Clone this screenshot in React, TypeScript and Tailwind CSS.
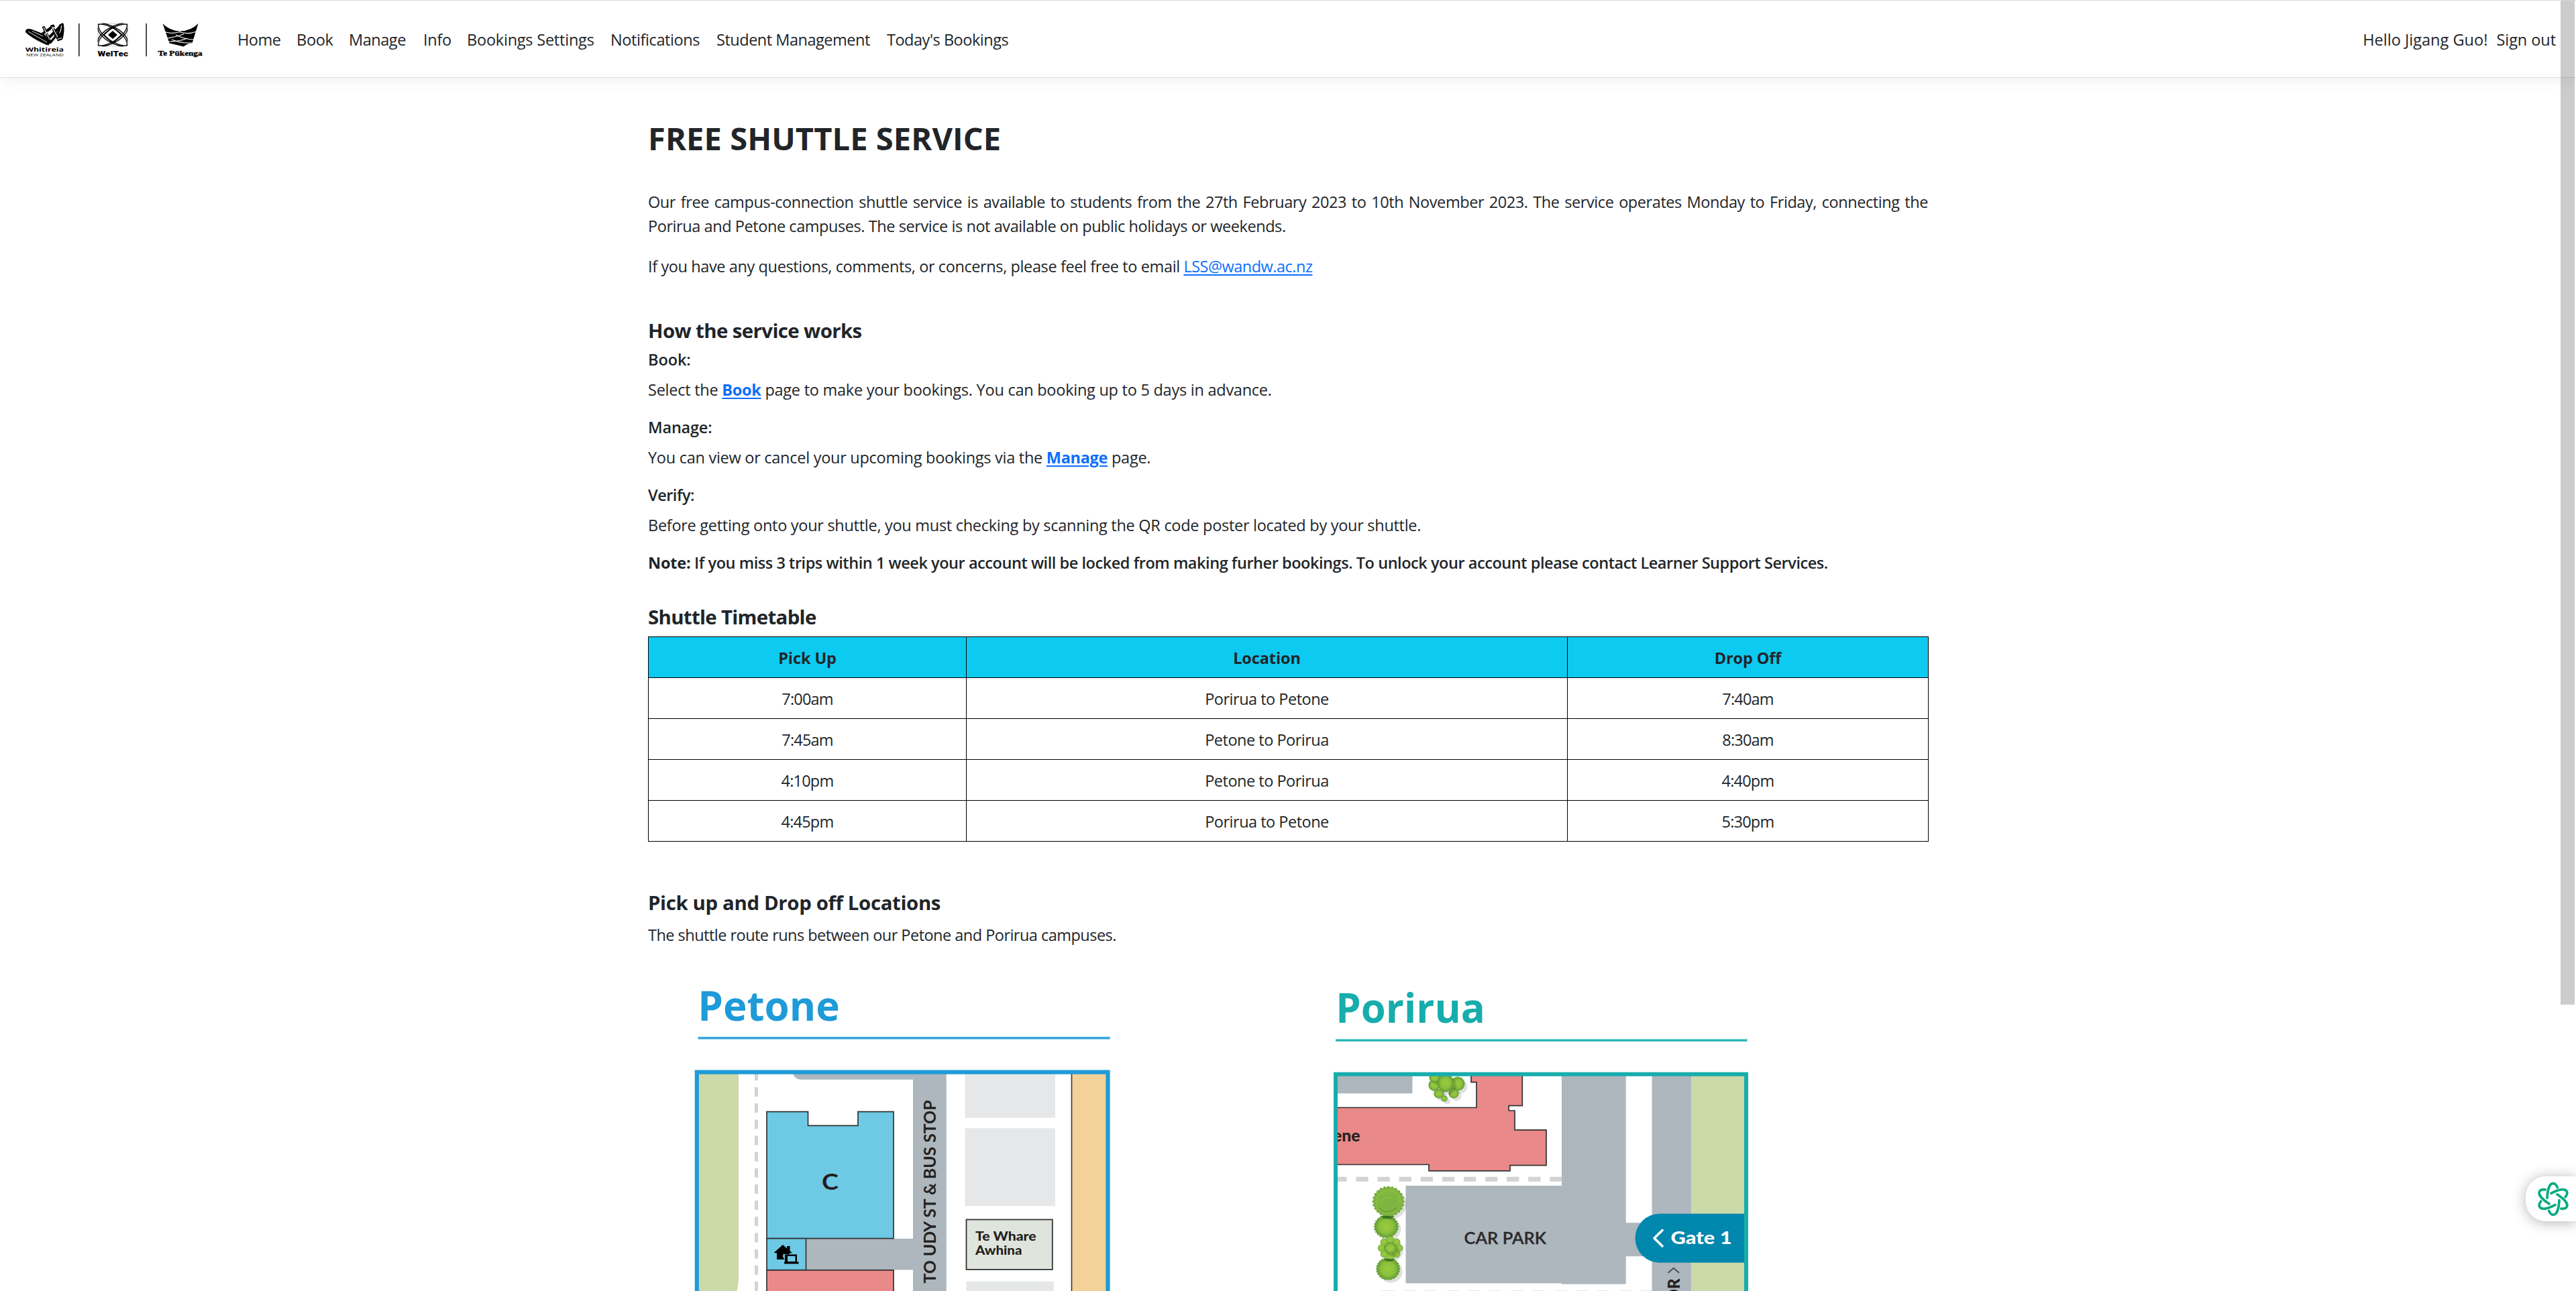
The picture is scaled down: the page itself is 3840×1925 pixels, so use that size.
import type { ReactNode } from 'react';

const NAV: { label: string; cls: string }[] = [
  { label: 'Home', cls: 'w-[88px] tracking-[-0.5px]' },
  { label: 'Book', cls: 'w-[78px] tracking-[-0.3px]' },
  { label: 'Manage', cls: 'w-[111px] tracking-[-0.45px]' },
  { label: 'Info', cls: 'w-[65px] tracking-[-0.3px]' },
  { label: 'Bookings Settings', cls: 'w-[214px] tracking-[-0.22px]' },
  { label: 'Notifications', cls: 'w-[158px] tracking-[-0.4px]' },
  { label: 'Student Management', cls: 'w-[254px] tracking-[-0.48px]' },
  { label: "Today's Bookings", cls: 'w-[190px] tracking-[-0.48px]' },
];

const ROWS = [
  ['7:00am', 'Porirua to Petone', '7:40am'],
  ['7:45am', 'Petone to Porirua', '8:30am'],
  ['4:10pm', 'Petone to Porirua', '4:40pm'],
  ['4:45pm', 'Porirua to Petone', '5:30pm'],
];

function Logos() {
  return (
    <svg className="h-[60px] w-[280px] shrink-0" viewBox="30 27 280 60">
      {/* Whitireia woven W */}
      <g>
        <path d="M38 47 Q37.5 42.5 42 42 Q45 41.6 48 43 L66 50 L72 58 L76 60 L72.5 66.5 Q68 66 56 59.5 Q44 53 38 47Z" fill="#000" />
        <path d="M42 46 L70 62 M48 45.5 L64 53" stroke="#fff" strokeWidth="0.9" fill="none" />
        <g fill="none" stroke="#000" strokeWidth="4.2" strokeLinejoin="round">
          <path d="M64.5 38.5 L75 62 L91 43" />
          <path d="M76.5 36.5 L87 57 L92 50 L93 35.5 L72 56" />
          <path d="M63 50 L81 37" />
        </g>
        <path d="M88 36 L93 33.5 Q96 36 95.5 44 Q95 53 93 58 L86 60.5 L84 56Z" fill="#000" />
        <path
          d="M65 40 L74 58 M77.5 38.5 L86 54.5 M91.5 37 Q91.5 44 88.5 48.5 M66 50.5 L71.5 46.5 M76 43.5 L81 39.5 M75 59 L80.5 53 M85.5 57.5 L92 55.5"
          stroke="#fff"
          strokeWidth="1.1"
          fill="none"
        />
      </g>
      <text x="38" y="75.8" fontFamily="Open Sans" fontWeight="700" fontSize="8.6" textLength="57" lengthAdjust="spacingAndGlyphs">Whitireia</text>
      <text x="39" y="82.8" fontFamily="Open Sans" fontSize="6" fill="#222" textLength="56" lengthAdjust="spacingAndGlyphs">NEW ZEALAND</text>
      <rect x="117" y="34" width="1.6" height="49" fill="#222" />
      <rect x="217.3" y="34" width="1.6" height="49" fill="#222" />
      {/* WelTec lattice */}
      <svg x="145.5" y="33.5" width="45" height="35" viewBox="0 0 45 35" preserveAspectRatio="none">
        <rect x="0.4" y="0.4" width="44.2" height="34.2" fill="none" stroke="#777" strokeWidth="0.6" />
        <g fill="none" stroke="#000" strokeWidth="1.3">
          <path d="M1 2 C14 -1 44 16 44 33 C31 36 1 19 1 2Z" />
          <path d="M44 2 C31 -1 1 16 1 33 C14 36 44 19 44 2Z" />
          <path d="M6 0 C26 3 44 16 45 28" />
          <path d="M39 35 C19 32 1 19 0 7" />
          <path d="M39 0 C19 3 1 16 0 28" />
          <path d="M6 35 C26 32 44 19 45 7" />
          <path d="M22.5 5.5 L36 17.5 L22.5 29.5 L9 17.5Z" strokeWidth="1.8" />
        </g>
        <path d="M22.5 11.5 L29.5 17.5 L22.5 23.5 L15.5 17.5Z" fill="#000" />
      </svg>
      <text x="145.5" y="82.5" fontFamily="Roboto" fontWeight="900" fontSize="11.6" textLength="45.5" lengthAdjust="spacingAndGlyphs">WelTec</text>
      {/* Te Pukenga crown */}
      <g>
        <path d="M242.5 34 Q253 45 268.5 45.5 Q285 45 295.5 34 L286.5 63.5 Q278 64 274 68.5 L252.5 63.5 Z" fill="#000" />
        <g stroke="#fff" fill="none" strokeWidth="1.2">
          <path d="M245 46.5 Q258 50.5 269 46" />
          <path d="M267 46.5 Q280 51 293 46" />
          <path d="M248 56 Q264 54 274 49.5" />
          <path d="M262 51 Q276 58 289.5 58" />
          <path d="M251 61 Q268 61 279 56" />
          <path d="M256 58 Q270 64 287 63" />
        </g>
      </g>
      <text x="235.6" y="81.5" fontFamily="Liberation Serif" fontWeight="700" fontSize="10.6" stroke="#000" strokeWidth="0.35" textLength="66" lengthAdjust="spacingAndGlyphs">Te Pūkenga</text>
    </svg>
  );
}

function Bush({ x, y, rx, ry, dark = false }: { x: number; y: number; rx: number; ry: number; dark?: boolean }) {
  const points = Array.from({ length: 48 }, (_, i) => {
    const a = (i / 48) * Math.PI * 2;
    const k = i % 2 ? 0.9 : 1;
    return `${(x + Math.cos(a) * rx * k).toFixed(1)},${(y + Math.sin(a) * ry * k).toFixed(1)}`;
  }).join(' ');
  return (
    <g>
      <ellipse cx={x + 4} cy={y + 4} rx={rx * 0.95} ry={ry * 0.95} fill="#000" opacity="0.12" />
      <polygon points={points} fill={dark ? 'url(#bushDark)' : 'url(#bush)'} />
    </g>
  );
}

const FLOWER = [0, 1, 2, 3, 4, 5, 6, 7];

function PetoneMap() {
  return (
    <svg className="h-[495px] w-[700px]" viewBox="0 0 700 495">
      <text x="40.3" y="92" fontFamily="Open Sans" fontWeight="700" fontSize="60" fill="#1e9bd8" textLength="211.5" lengthAdjust="spacingAndGlyphs">Petone</text>
      <rect x="40.6" y="116" width="614" height="3.6" fill="#36a6de" />
      <path d="M42 170 H101 V476 Q101 486 98 497 H42Z" fill="#ccd9a8" />
      <path d="M127.5 167 V497" stroke="#d1d3d4" strokeWidth="5" strokeDasharray="13.9 10.25" />
      <path d="M182 170 Q184 179.7 194 179.7 H361 V417 H201 V463.5 H361 V497 H410.7 V170Z" fill="#adb7bd" />
      <g stroke="#333" strokeWidth="1.7">
        <path d="M143 227.7 H204.5 V248.3 H279 V227.7 H332 V416.7 H143Z" fill="#6ec9e5" />
        <rect x="143" y="416.7" width="58.5" height="47" fill="#6ec9e5" />
        <path d="M143 500 V463.8 H332 V500" fill="#e98989" />
      </g>
      <text x="225" y="343.5" fontFamily="Lato" fontWeight="700" fontSize="33" fill="#231f20" textLength="25" lengthAdjust="spacingAndGlyphs">C</text>
      <g fill="#000">
        <path d="M153.5 438 L167 426 L173 431.5 V428 H177.5 V435 L181 438.5 H177 V440 H167.5 L167 444 L169.5 448 H158 V438.5Z" />
        <path d="M170 440.5 H188 V451.5 H190.5 V454.5 H169 V451.5 H170Z" />
        <rect x="174" y="443" width="11.5" height="8" fill="#6ec9e5" />
      </g>
      <text transform="translate(394.6 483.5) rotate(-90)" fontFamily="Lato" fontWeight="700" fontSize="25.2" fill="#231f20" textLength="273" lengthAdjust="spacingAndGlyphs">TO UDY ST &amp; BUS STOP</text>
      <g fill="#e6e7e9">
        <rect x="438.5" y="170" width="134.5" height="66.8" />
        <rect x="438.5" y="252.3" width="134.5" height="116" />
        <rect x="440.3" y="480.7" width="130.5" height="20" />
      </g>
      <rect x="440.5" y="388.5" width="128.3" height="74.5" fill="#dfe5dd" stroke="#333" strokeWidth="1.8" />
      <g fontFamily="Lato" fontWeight="900" fontSize="18.8" fill="#231f20">
        <text x="454" y="420.3" textLength="90.5" lengthAdjust="spacingAndGlyphs">Te Whare</text>
        <text x="454" y="440.7" textLength="69.5" lengthAdjust="spacingAndGlyphs">Awhina</text>
      </g>
      <rect x="597.5" y="170" width="52" height="330" fill="#f3d299" />
      <path d="M597.5 170 V500" stroke="#333" strokeWidth="1.6" />
      <path d="M38.8 500 V168.7 H651.5 V500" fill="none" stroke="#1e9bd8" strokeWidth="6.2" />
    </svg>
  );
}

function PoriruaMap() {
  return (
    <svg className="h-[495px] w-[700px]" viewBox="0 0 700 495">
      <defs>
        <radialGradient id="bush">
          <stop offset="0" stopColor="#9ccc3c" />
          <stop offset="0.55" stopColor="#8cc03e" />
          <stop offset="1" stopColor="#5c9632" />
        </radialGradient>
        <radialGradient id="bushDark">
          <stop offset="0" stopColor="#7cb342" />
          <stop offset="0.8" stopColor="#82b840" />
          <stop offset="1" stopColor="#6ba23a" />
        </radialGradient>
        <clipPath id="frameClip">
          <rect x="43" y="172" width="609" height="330" />
        </clipPath>
      </defs>
      <text x="41.3" y="95.3" fontFamily="Open Sans" fontWeight="700" fontSize="60" fill="#17adac" textLength="222.5" lengthAdjust="spacingAndGlyphs">Porirua</text>
      <rect x="41" y="119.5" width="613.5" height="3.4" fill="#2bb4b4" />
      <g clipPath="url(#frameClip)">
        <rect x="43" y="172" width="112.4" height="28.4" fill="#adb7bd" />
        <path d="M378 170 H473.7 V393.3 H512.5 V170 H571.4 V500 H512.5 V443.3 H473.7 V484.7 H378 V483.5 H145.5 V338 H378Z" fill="#adb7bd" />
        <rect x="571.4" y="170" width="82" height="330" fill="#ccd9a8" />
        <Bush x={188} y={188} rx={9} ry={9} />
        <Bush x={223} y={186} rx={11} ry={11} />
        <Bush x={195} y={201} rx={8} ry={7} />
        <Bush x={217} y={200} rx={8} ry={8} />
        <Bush x={203} y={208} rx={5} ry={5} />
        <Bush x={189} y={177} rx={9} ry={7} />
        <Bush x={205} y={185} rx={13} ry={14} />
        <path
          d="M40 221.5 H251 V183.6 H243 V168 H319.3 V218.7 H299.2 V226 H308 V254.8 H355 V307.6 H301 V315.8 H180 V306.5 H40Z"
          fill="#e98989"
          stroke="#333"
          strokeWidth="1.7"
        />
        <text x="37" y="272" fontFamily="Lato" fontWeight="900" fontSize="24" fill="#231f20" textLength="40.5" lengthAdjust="spacingAndGlyphs">ene</text>
        <path d="M39.3 328.2 H378" stroke="#d1d3d4" strokeWidth="7" strokeDasharray="18.3 13.8" />
        <path d="M110 497 H512" stroke="#d1d3d4" strokeWidth="5" strokeDasharray="18.3 13.8" />
        <Bush x={116.5} y={399} rx={19} ry={17.5} />
        <Bush x={119.6} y={361.5} rx={24.5} ry={23.5} dark />
        <g fill="none" stroke="#95c83d" strokeWidth="1.1" strokeLinecap="round" opacity="0.75">
          <path d="M103 366 Q100 350 112 348 Q121 342 129 348 Q138 350 137 362" />
          <path d="M110 366 Q110 357 116 357 Q121 353 126 358" />
        </g>
        <path d="M106 371 Q118 383 133 370" fill="none" stroke="#5b9232" strokeWidth="1.5" opacity="0.7" />
        <Bush x={119.2} y={462} rx={18.5} ry={17.5} />
        <ellipse cx="126" cy="434" rx="16" ry="16" fill="#000" opacity="0.12" />
        {FLOWER.map((i) => (
          <circle
            key={i}
            cx={122.5 + Math.cos((i * Math.PI) / 4) * 13}
            cy={431 + Math.sin((i * Math.PI) / 4) * 12.5}
            r="5.2"
            fill="#92c83e"
            stroke="#669f33"
            strokeWidth="0.9"
          />
        ))}
        <Bush x={122.5} y={431} rx={10} ry={9} />
        <path d="M108 383 H129 L124 387 H112Z M112 447 H130 L124 451 H117Z" fill="#2f6b1a" opacity="0.75" />
        <text x="232.5" y="424.5" fontFamily="Lato" fontWeight="600" fontSize="25" fill="#2b2829" stroke="#2b2829" strokeWidth="0.3" textLength="122.5" lengthAdjust="spacingAndGlyphs">CAR PARK</text>
        <path d="M655 379.7 H524 A36.5 36.5 0 0 0 524 452.7 H655Z" fill="#0087ae" />
        <path d="M528 404.5 L516 416.2 L528 428" fill="none" stroke="#fff" strokeWidth="3.6" strokeLinecap="round" strokeLinejoin="round" />
        <text x="540.5" y="425" fontFamily="Lato" fontWeight="900" fontSize="26.5" fill="#fff" textLength="91" lengthAdjust="spacingAndGlyphs">Gate 1</text>
        <path d="M536.5 468 L544.8 460.8 L553 468" fill="none" stroke="#4a4a4d" strokeWidth="1.8" />
        <text transform="translate(553.6 511.5) rotate(-90)" fontFamily="Lato" fontWeight="900" fontSize="24" fill="#231f20" textLength="35" lengthAdjust="spacingAndGlyphs">OR</text>
      </g>
      <path d="M41 500 V171.7 H653 V500" fill="none" stroke="#17adac" strokeWidth="6" />
    </svg>
  );
}

const ANGLES = [0, 60, 120, 180, 240, 300];

function AssistantTab() {
  return (
    <div className="absolute top-[1754px] right-0 flex h-[67px] w-[75px] items-center rounded-l-[30px] bg-white pl-[15px] shadow-[0_2px_20px_rgba(0,0,0,0.3)]">
      <svg className="h-[54px] w-[52px]" viewBox="-78 -81 156 162">
        <g fill="none" stroke="#06ab80" strokeWidth="11" strokeLinecap="round">
          {ANGLES.map((a) => (
            <path key={a} transform={`rotate(${a})`} d="M-27 -5 C-25 -50 -14 -70 0 -70 C8 -70 15 -62 19 -52" />
          ))}
        </g>
      </svg>
    </div>
  );
}

function Link({ children, bold = false }: { children: ReactNode; bold?: boolean }) {
  return (
    <a
      href="#"
      className={
        bold
          ? 'font-bold tracking-[-0.3px] text-[#0d6efd] underline decoration-2 underline-offset-[3px]'
          : 'tracking-[-0.5px] text-[#0d6efd] underline decoration-2 underline-offset-[3px]'
      }
    >
      {children}
    </a>
  );
}

export default function App() {
  return (
    <div className="relative h-[1925px] w-[3840px] overflow-hidden bg-white font-['Open_Sans',sans-serif] text-[23.5px] leading-[36px] text-[#212529]">
      <header className="flex h-[116px] items-center border-t border-b border-t-[#d9d9d9] border-b-[#dee2e6] bg-white shadow-[0_6px_18px_rgba(0,0,0,0.05)]">
        <div className="w-[30px]" />
        <Logos />
        <nav className="ml-[44px] flex pt-px">
          {NAV.map((n) => (
            <a key={n.label} href="#" className={`${n.cls} whitespace-nowrap`}>
              {n.label}
            </a>
          ))}
        </nav>
        <div className="mr-[30px] ml-auto flex gap-[13px] pt-px whitespace-nowrap">
          <span className="tracking-[0.03px]">Hello Jigang Guo!</span>
          <a href="#" className="tracking-[-0.06px]">
            Sign out
          </a>
        </div>
      </header>

      <main className="ml-[966px] w-[1908px] pt-[61px]">
        <h1 className="text-[47px] leading-[58px] font-bold tracking-[0.1px]">FREE SHUTTLE SERVICE</h1>
        <p className="mt-12 text-justify tracking-[-0.43px]">
          Our free campus-connection shuttle service is available to students from the 27th February 2023 to 10th November
          2023. The service operates Monday to Friday, connecting the Porirua and Petone campuses. The service is not
          available on public holidays or weekends.
        </p>
        <p className="mt-6 tracking-[-0.39px]">
          If you have any questions, comments, or concerns, please feel free to email <Link>LSS@wandw.ac.nz</Link>
        </p>

        <h2 className="mt-[60px] text-[29.4px] leading-[36px] font-bold tracking-[-0.6px]">How the service works</h2>
        <h3 className="mt-[11px] leading-[29px] font-semibold tracking-[-0.1px]">Book:</h3>
        <p className="mt-3 tracking-[-0.25px]">
          Select the <Link bold>Book</Link> page to make your bookings. You can booking up to 5 days in advance.
        </p>
        <h3 className="mt-[24px] leading-[29px] font-semibold tracking-[-0.2px]">Manage:</h3>
        <p className="mt-3 tracking-[-0.27px]">
          You can view or cancel your upcoming bookings via the <Link bold>Manage</Link> page.
        </p>
        <h3 className="mt-[24px] leading-[29px] font-semibold tracking-[-0.5px]">Verify:</h3>
        <p className="mt-[12px] tracking-[-0.28px]">
          Before getting onto your shuttle, you must checking by scanning the QR code poster located by your shuttle.
        </p>
        <h3 className="mt-6 leading-[29px] font-semibold tracking-[-0.45px]">
          <b className="font-bold tracking-[-0.2px]">Note:</b> If you miss 3 trips within 1 week your account will be
          locked from making furher bookings. To unlock your account please contact Learner Support Services.
        </h3>

        <h2 className="mt-[48px] text-[29.4px] leading-[36px] font-bold tracking-[-0.67px]">Shuttle Timetable</h2>
        <table className="mt-[11px] w-[1909px] table-fixed border-collapse text-center">
          <colgroup>
            <col className="w-[474px]" />
            <col className="w-[896px]" />
            <col />
          </colgroup>
          <thead>
            <tr className="bg-[#0dcaf0]">
              {['Pick Up', 'Location', 'Drop Off'].map((h) => (
                <th key={h} className="h-[61px] border border-black p-0 pt-px font-bold tracking-[-0.1px]">
                  {h}
                </th>
              ))}
            </tr>
          </thead>
          <tbody>
            {ROWS.map((r) => (
              <tr key={r[0]}>
                <td className="h-[61px] border border-black p-0 pt-px tracking-[-0.8px]">{r[0]}</td>
                <td className="h-[61px] border border-black p-0 pt-px tracking-[-0.5px]">{r[1]}</td>
                <td className="h-[61px] border border-black p-0 pt-px tracking-[-0.8px]">{r[2]}</td>
              </tr>
            ))}
          </tbody>
        </table>

        <h2 className="mt-[73px] text-[29.4px] leading-[36px] font-bold tracking-[-0.36px]">
          Pick up and Drop off Locations
        </h2>
        <p className="mt-[12px] tracking-[-0.52px]">The shuttle route runs between our Petone and Porirua campuses.</p>
        <div className="mt-[18px] ml-[34px] flex gap-[250px]">
          <div className="shrink-0">
            <PetoneMap />
          </div>
          <div className="shrink-0">
            <PoriruaMap />
          </div>
        </div>
      </main>

      <div className="absolute top-px right-[2px] h-[1497px] w-[21px] bg-black/20" />
      <AssistantTab />
    </div>
  );
}
